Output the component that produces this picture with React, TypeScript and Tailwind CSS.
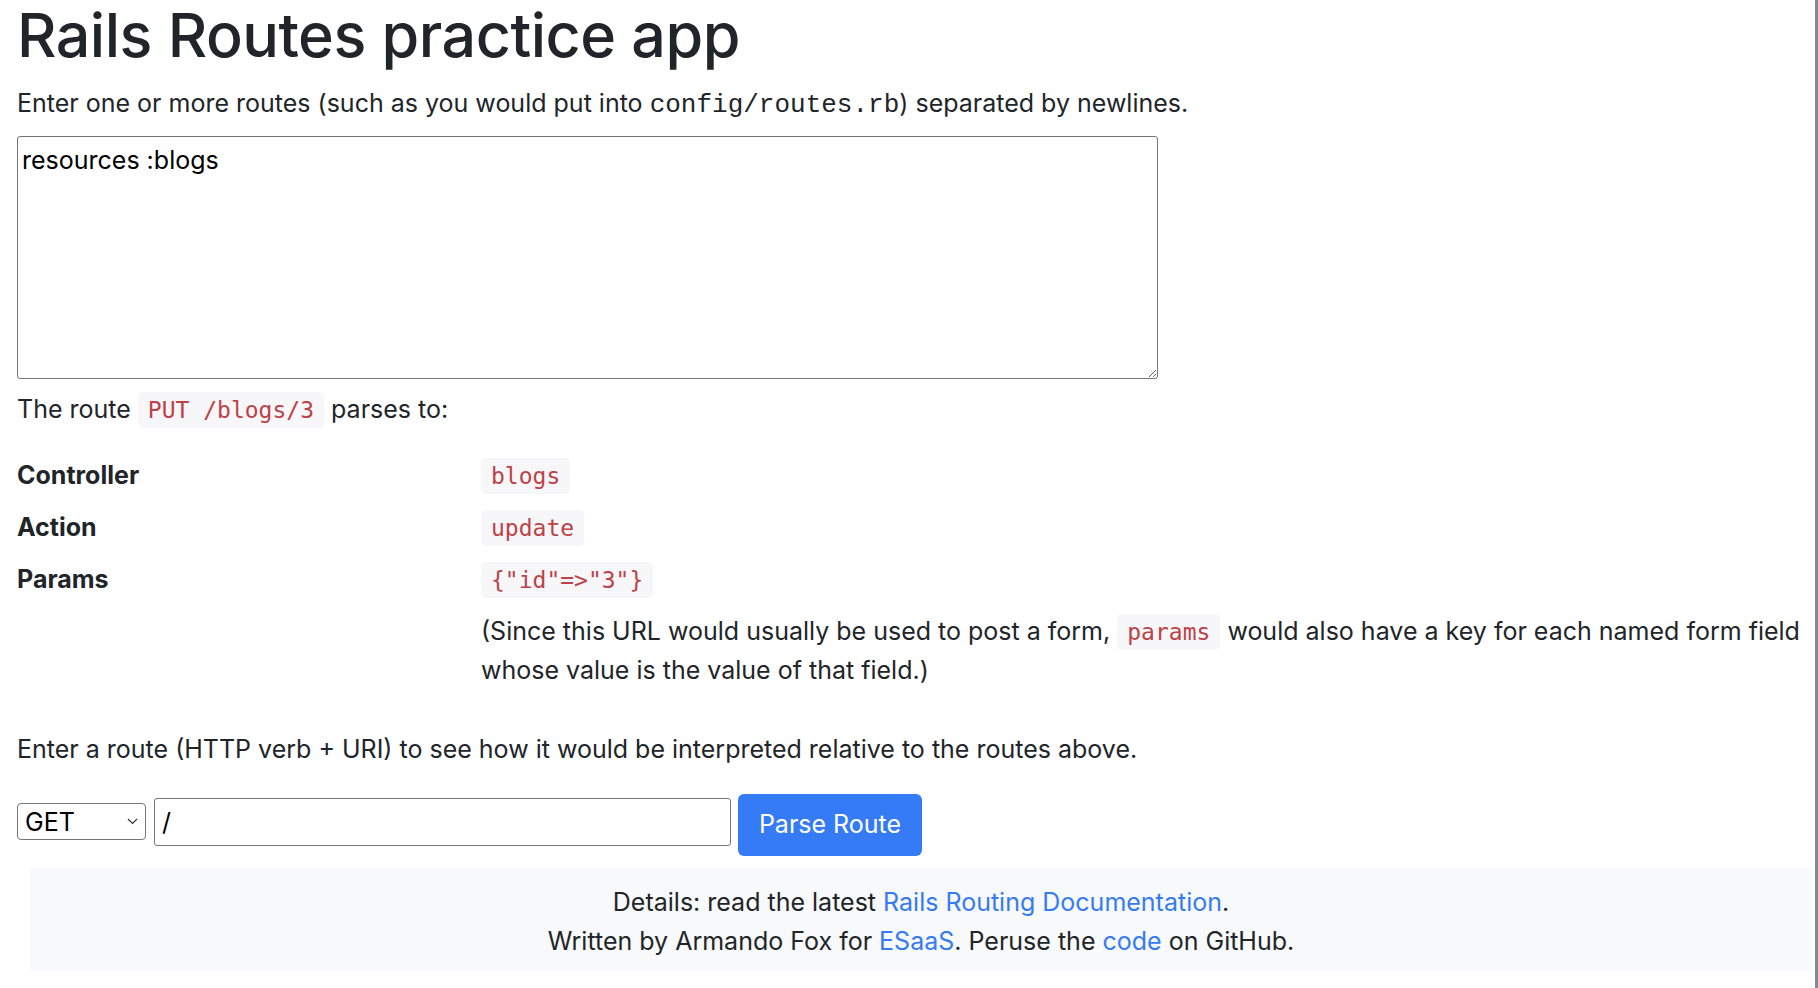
import React from 'react'

const sans = "font-['Inter','Liberation_Sans',sans-serif]"

const Code = ({ children }: { children: React.ReactNode }) => (
  <code className="rounded-[5px] bg-[#f7f7f9] px-[10px] py-[5px] font-['DejaVu_Sans_Mono',monospace] text-[23px] text-[#bd4147]">
    {children}
  </code>
)

const App = () => {
  return (
    <div className={`min-h-screen bg-white border-r-[3px] border-[#808a93] text-[#212529] ${sans}`}>
      <div className="pl-[17px]">
        <h1 className="text-[61px] leading-[71px] font-medium tracking-[-0.5px]">Rails Routes practice app</h1>

        <p className="mt-[13px] text-[25px] leading-[38px]">
          Enter one or more routes (such as you would put into{' '}
          <tt className="font-['Liberation_Mono',monospace] text-[26px]">config/routes.rb</tt>) separated by newlines.
        </p>

        <textarea
          className={`mt-[12px] block h-[243px] w-[1141px] resize rounded-[3px] border border-[#767676] px-[4px] pt-[7px] text-[25px] leading-[32px] text-black outline-none ${sans}`}
          defaultValue="resources :blogs"
        />

        <p className="mt-[11px] text-[25px] leading-[38px]">
          The route <Code>PUT /blogs/3</Code> parses to:
        </p>

        <div className="mt-[27px] grid grid-cols-[464px_1fr] text-[25px] leading-[38px]">
          <div className="mb-[13px] font-bold">Controller</div>
          <div className="mb-[13px]">
            <Code>blogs</Code>
          </div>
          <div className="mb-[13px] font-bold">Action</div>
          <div className="mb-[13px]">
            <Code>update</Code>
          </div>
          <div className="mb-[13px] font-bold">Params</div>
          <div className="mb-[13px]">
            <Code>{'{"id"=>"3"}'}</Code>
          </div>
          <div />
          <div>
            (Since this URL would usually be used to post a form, <Code>params</Code> would also have a key for each
            named form field whose value is the value of that field.)
          </div>
        </div>

        <p className="mt-[41px] text-[25px] leading-[38px]">
          Enter a route (HTTP verb + URI) to see how it would be interpreted relative to the routes above.
        </p>

        <div className="mt-[26px] flex items-start">
          <div className="relative mt-[9px]">
            <select
              className={`h-[37px] w-[129px] appearance-none rounded-[4px] border border-[#767676] bg-white pl-[7px] text-[25px] text-black outline-none ${sans}`}
              defaultValue="GET"
            >
              <option>GET</option>
              <option>POST</option>
              <option>PUT</option>
              <option>PATCH</option>
              <option>DELETE</option>
            </select>
            <svg
              className="pointer-events-none absolute right-[8px] top-[15px]"
              width="11"
              height="7"
              viewBox="0 0 11 7"
              fill="none"
              stroke="#333"
              strokeWidth="1.2"
            >
              <path d="M1 1l4.5 4.5L10 1" />
            </svg>
          </div>
          <input
            className={`ml-[8px] mt-[4px] h-[48px] w-[577px] rounded-[3px] border border-[#767676] px-[7px] text-[25px] text-black outline-none ${sans}`}
            defaultValue="/"
          />
          <button className="ml-[7px] h-[62px] w-[184px] rounded-[6px] bg-[#357bf6] text-[25px] text-white">
            Parse Route
          </button>
        </div>

        <footer className="ml-[13px] mr-[3px] mt-[12px] bg-[#f8f9fa] pt-[15px] pb-[10px] text-center text-[25px] leading-[39px]">
          <div>
            Details: read the latest{' '}
            <a href="#" className="text-[#357bf6]">
              Rails Routing Documentation
            </a>
            .
          </div>
          <div>
            Written by Armando Fox for{' '}
            <a href="#" className="text-[#357bf6]">
              ESaaS
            </a>
            . Peruse the{' '}
            <a href="#" className="text-[#357bf6]">
              code
            </a>{' '}
            on GitHub.
          </div>
        </footer>
      </div>
    </div>
  )
}

export default App
